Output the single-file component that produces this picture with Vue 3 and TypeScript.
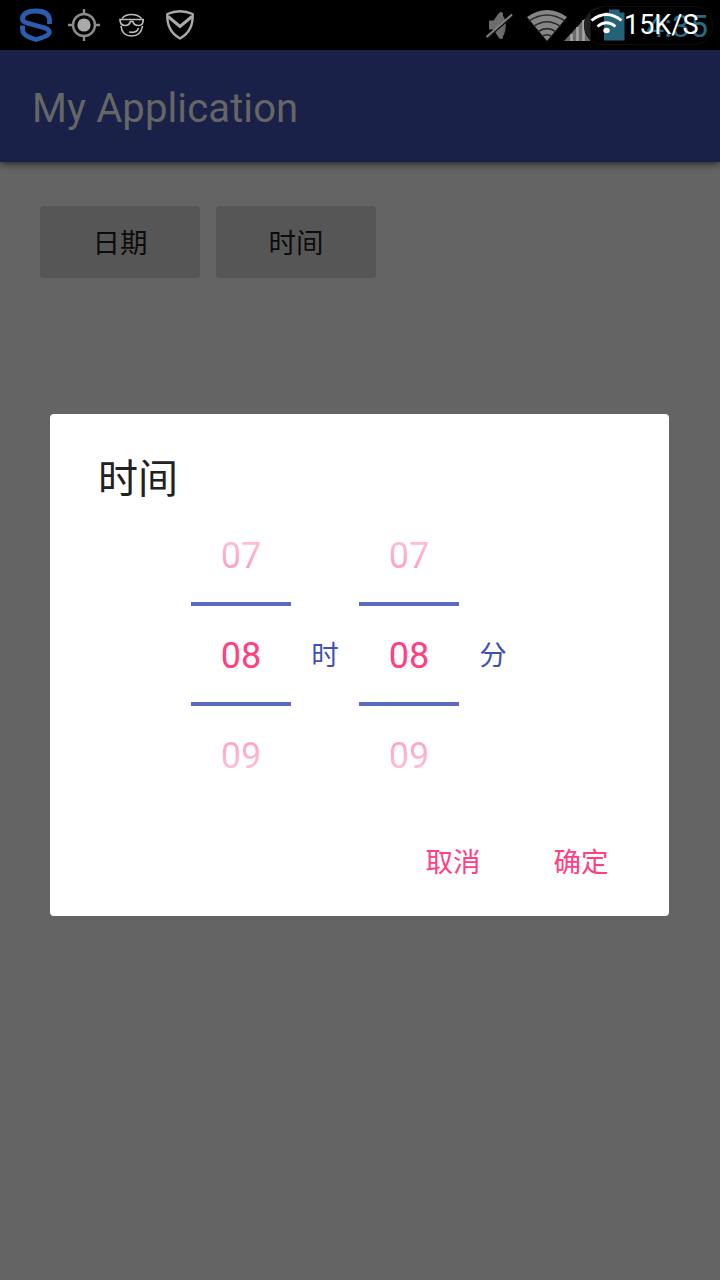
<script setup lang="ts">
interface PickerColumn {
  unit: string
  values: string[]
}

const actions: string[] = ['日期', '时间']
const columns: PickerColumn[] = [
  { unit: '时', values: ['07', '08', '09'] },
  { unit: '分', values: ['07', '08', '09'] },
]
</script>

<template>
  <div class="screen">
    <header class="status">
      <svg class="status-icons" width="720" height="50" viewBox="0 0 720 50" fill="none">
        <g class="system">
          <!-- security app -->
          <path
            d="M49.500 24V19Q48 11 36 11Q24 11 22.500 18Q21.800 21.500 27 23L45 28Q50.500 30 49 33.500Q47.500 36.500 36 39.500Q24.500 36.500 23 32Q22.500 30 22.500 25.500"
            stroke="#2b5cb0" stroke-width="4.800"
          />
          <!-- location -->
          <circle cx="84" cy="25" r="11" stroke="#8c8c8c" stroke-width="2.400" />
          <circle cx="84" cy="25" r="6.600" fill="#aaa" />
          <path d="M84 9v6M84 35v6M68 25h6M94 25h6" stroke="#8c8c8c" stroke-width="2.400" />
          <!-- smiley with sunglasses -->
          <path d="M122 18.500Q125 14.500 131.500 14.500T141.500 18.500M121 26Q122 36 131.500 36T142.500 26M129 32Q137 33.500 138.500 28" stroke="#bcbcbc" stroke-width="1.600" />
          <path d="M120 19.500H143.200Q143.500 25.500 138.500 25.500Q134 25.500 132.800 21.500H130.500Q129.300 25.500 125 25.500Q120 25.500 120 19.500Z" stroke="#bcbcbc" stroke-width="1.700" />
          <!-- shield -->
          <path d="M167.300 14Q180 8.500 192.700 14Q193.500 31 180 38.500Q166.500 31 167.300 14Z" stroke="#aaa" stroke-width="2.400" stroke-linejoin="round" />
          <path d="M168 16.500L180 26.500L192 16.500" stroke="#aaa" stroke-width="3" />
          <!-- muted speaker -->
          <path d="M489 20.500h4.500L499 13q2-2 4 0v25q-2 2-4 0l-5.500-8.500H489Z" fill="#6c6c6c" />
          <path d="M502.500 17Q506.500 25 502.500 35" stroke="#666" stroke-width="2.800" />
          <path d="M487 38.200L512.800 15.700" stroke="#111" stroke-width="2" />
          <path d="M486.500 37L512 14.500" stroke="#808080" stroke-width="2" />
          <!-- system wifi -->
          <path d="M527 17Q547 3 567 17L547 41Z" fill="#858585" />
          <path d="M529 21Q547 9 565 21M533.500 26.500Q547 17 560.500 26.500M538 31.800Q547 25.500 556 31.800M542 36.500Q547 33 552 36.500" stroke="#2a2a2a" stroke-width="1.700" />
          <!-- signal strength -->
          <path d="M564 41L590 13V41Z" fill="#6c6c6c" />
          <path d="M571.500 34v7M577.500 27v14M583.500 20v21" stroke="#a5a5a5" stroke-width="2.600" />
          <!-- battery -->
          <path d="M609 9.500h10.500v3h5V40.500h-20.500V12.500h5Z" fill="#2c7592" />
        </g>
        <!-- translucent overlay badge -->
        <rect x="584.500" y="6.500" width="128" height="38" rx="18" fill="#000" fill-opacity=".16" stroke="#0e0e0e" />
        <path d="M603 7Q585 8 585 25Q585 36 591 41V12Z" fill="#171717" fill-opacity=".85" />
        <!-- overlay wifi -->
        <path d="M591.500 20.500Q606.500 8.500 621.500 20.500M597.500 26.500Q606.500 19 615.500 26.500" stroke="#fff" stroke-width="2.800" />
        <ellipse cx="606.500" cy="30.500" rx="3.200" ry="2.800" fill="#fff" />
      </svg>
      <span class="clock">4:35</span>
      <span class="speed">15K/S</span>
    </header>

    <div class="toolbar"><span>My Application</span></div>

    <main class="content">
      <button v-for="label in actions" :key="label" class="action">{{ label }}</button>
    </main>

    <section class="dialog" role="dialog">
      <h2>时间</h2>
      <div class="picker">
        <template v-for="column in columns" :key="column.unit">
          <div class="wheel">
            <span
              v-for="(value, index) in column.values"
              :key="value"
              :class="{ before: index === 0, selected: index === 1, after: index === 2 }"
            >{{ value }}</span>
          </div>
          <span class="unit">{{ column.unit }}</span>
        </template>
      </div>
      <footer>
        <button class="cancel">取消</button>
        <button class="confirm">确定</button>
      </footer>
    </section>
  </div>
</template>

<style>
body {
  margin: 0;
  background: #646464;
}
</style>

<style scoped>
.screen {
  position: relative;
  width: 720px;
  height: 1280px;
  overflow: hidden;
  background: #646464;
  font-family: Roboto, "Noto Sans CJK SC", sans-serif;
}

button {
  margin: 0;
  padding: 0 0 2px;
  border: 0;
  background: none;
  font: inherit;
  font-size: 27.5px;
}

.status {
  position: relative;
  height: 50px;
  background: #000;
}

.status-icons {
  display: block;
}

.system {
  filter: blur(0.35px);
}

.clock,
.speed {
  position: absolute;
  white-space: nowrap;
}

.clock {
  right: 12px;
  top: 7px;
  color: #286b87;
  font-size: 32px;
  line-height: 38px;
}

.speed {
  left: 624px;
  top: 8px;
  color: #fff;
  font-size: 27px;
  line-height: 34px;
}

.toolbar {
  display: flex;
  align-items: center;
  box-sizing: border-box;
  height: 112px;
  padding: 4px 32px 0;
  background: #1a2148;
  box-shadow: 0 2px 7px rgba(0, 0, 0, 0.6);
  color: #666;
  font-size: 40px;
  letter-spacing: 0.12px;
}

.content {
  display: flex;
  gap: 16px;
  padding: 44px 40px;
}

.action {
  width: 160px;
  height: 72px;
  border-radius: 4px;
  background: #565656;
  color: #0c0c0c;
}

.dialog {
  position: absolute;
  left: 50px;
  top: 414px;
  display: flex;
  flex-direction: column;
  box-sizing: border-box;
  width: 619px;
  height: 502px;
  border-radius: 4px;
  background: #fff;
}

h2 {
  height: 60px;
  margin: 36px 0 0 48px;
  color: #212121;
  font-size: 40px;
  font-weight: 400;
  line-height: 60px;
}

.picker {
  display: flex;
  align-items: center;
  height: 300px;
  margin: -6px 0 0 141px;
}

.wheel {
  display: grid;
  grid-template-rows: 98px 104px 98px;
  width: 100px;
  font-size: 36px;
  line-height: 100px;
  text-align: center;
}

.wheel span {
  color: #ff4081;
}

.wheel .selected {
  height: 96px;
  border: solid #5c6bc0;
  border-width: 4px 0;
}

.wheel .before,
.wheel .after {
  background: linear-gradient(#ffe3ec, #ff7fab);
  background-clip: text;
  color: transparent;
}

.wheel .before {
  line-height: 104px;
}

.wheel .after {
  background-image: linear-gradient(#ff7fab, #ffe3ec);
}

.unit {
  width: 68px;
  padding-bottom: 2px;
  color: #3f51b5;
  font-size: 27.5px;
  text-align: center;
}

footer {
  display: flex;
  justify-content: flex-end;
  margin-top: 21px;
  padding-right: 24px;
}

footer button {
  width: 128px;
  height: 72px;
  color: #ff4081;
}
</style>
